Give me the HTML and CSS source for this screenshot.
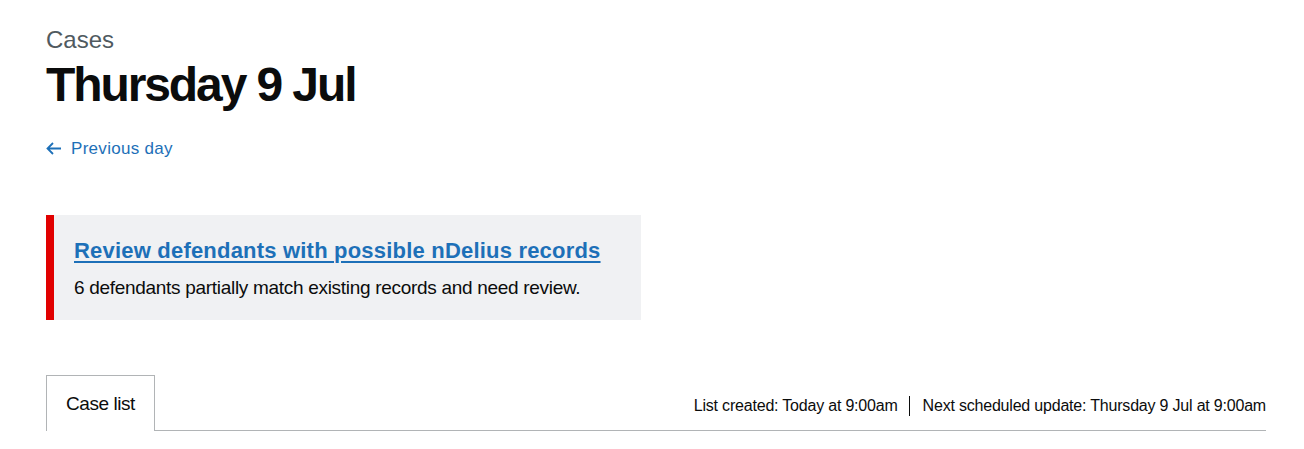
FILE: index.html
```html
<!DOCTYPE html>
<html lang="en">
<head>
<meta charset="utf-8">
<title>Cases - Thursday 9 Jul</title>
<link rel="stylesheet" href="styles.css">
</head>
<body>
<main class="page">
  <span class="caption">Cases</span>
  <h1 class="heading">Thursday 9 Jul</h1>
  <a class="back-link" href="#">
    <svg class="back-arrow" width="15" height="13" viewBox="0 0 15 13" aria-hidden="true">
      <path d="M7 1 L1.5 6.5 L7 12 M1.5 6.5 H15" fill="none" stroke="#1d70b8" stroke-width="1.8"/>
    </svg>
    <span>Previous day</span>
  </a>
  <div class="banner">
    <a class="banner-link" href="#">Review defendants with possible nDelius records</a>
    <p class="banner-body">6 defendants partially match existing records and need review.</p>
  </div>
  <div class="tabs-row">
    <div class="tab">Case list</div>
    <div class="meta">
      <span class="meta-item">List created: Today at 9:00am</span>
      <span class="meta-item meta-item--divided">Next scheduled update: Thursday 9 Jul at 9:00am</span>
    </div>
  </div>
</main>
</body>
</html>
```
FILE: styles.css
```css
* { box-sizing: border-box; }
html, body { margin: 0; padding: 0; background: #fff; }
body {
  font-family: "Liberation Sans", Arial, sans-serif;
  color: #0b0c0c;
}
.page {
  padding: 25px 38px 0 46px;
  display: flex;
  flex-direction: column;
  align-items: flex-start;
}
.caption {
  display: block;
  font-size: 24px;
  line-height: 30px;
  color: #505a5f;
  margin-bottom: 5px;
}
.heading {
  margin: 0;
  font-size: 48px;
  line-height: 50px;
  font-weight: 700;
  letter-spacing: -2.1px;
}
.back-link {
  margin-top: 26px;
  display: flex;
  align-items: center;
  gap: 10px;
  font-size: 17px;
  line-height: 25px;
  letter-spacing: 0.3px;
  color: #1d70b8;
  text-decoration: none;
}
.back-arrow { display: block; }
.banner {
  margin-top: 54px;
  width: 595px;
  background: #f0f1f3;
  border-left: 8px solid #e10000;
  padding: 21px 20px 20px 20px;
}
.banner-link {
  display: inline-block;
  font-size: 22px;
  line-height: 30px;
  font-weight: 700;
  letter-spacing: 0.2px;
  color: #1d70b8;
  text-decoration: underline;
  text-decoration-thickness: 2px;
  text-underline-offset: 3px;
}
.banner-body {
  margin: 9px 0 0;
  font-size: 19px;
  line-height: 25px;
  letter-spacing: -0.3px;
}
.tabs-row {
  margin-top: 55px;
  align-self: stretch;
  display: flex;
  justify-content: space-between;
  align-items: flex-start;
  border-bottom: 1px solid #b1b4b6;
}
.tab {
  border: 1px solid #b1b4b6;
  border-bottom: 0;
  background: #fff;
  padding: 0 19px;
  line-height: 55px;
  font-size: 19px;
  letter-spacing: -0.45px;
  margin-bottom: -1px;
}
.meta {
  display: flex;
  align-items: center;
  padding-top: 21px;
  font-size: 16px;
  line-height: 20px;
  letter-spacing: -0.2px;
}
.meta-item { display: block; }
.meta-item--divided {
  margin-left: 11px;
  padding-left: 13px;
  border-left: 1px solid #0b0c0c;
}
```
